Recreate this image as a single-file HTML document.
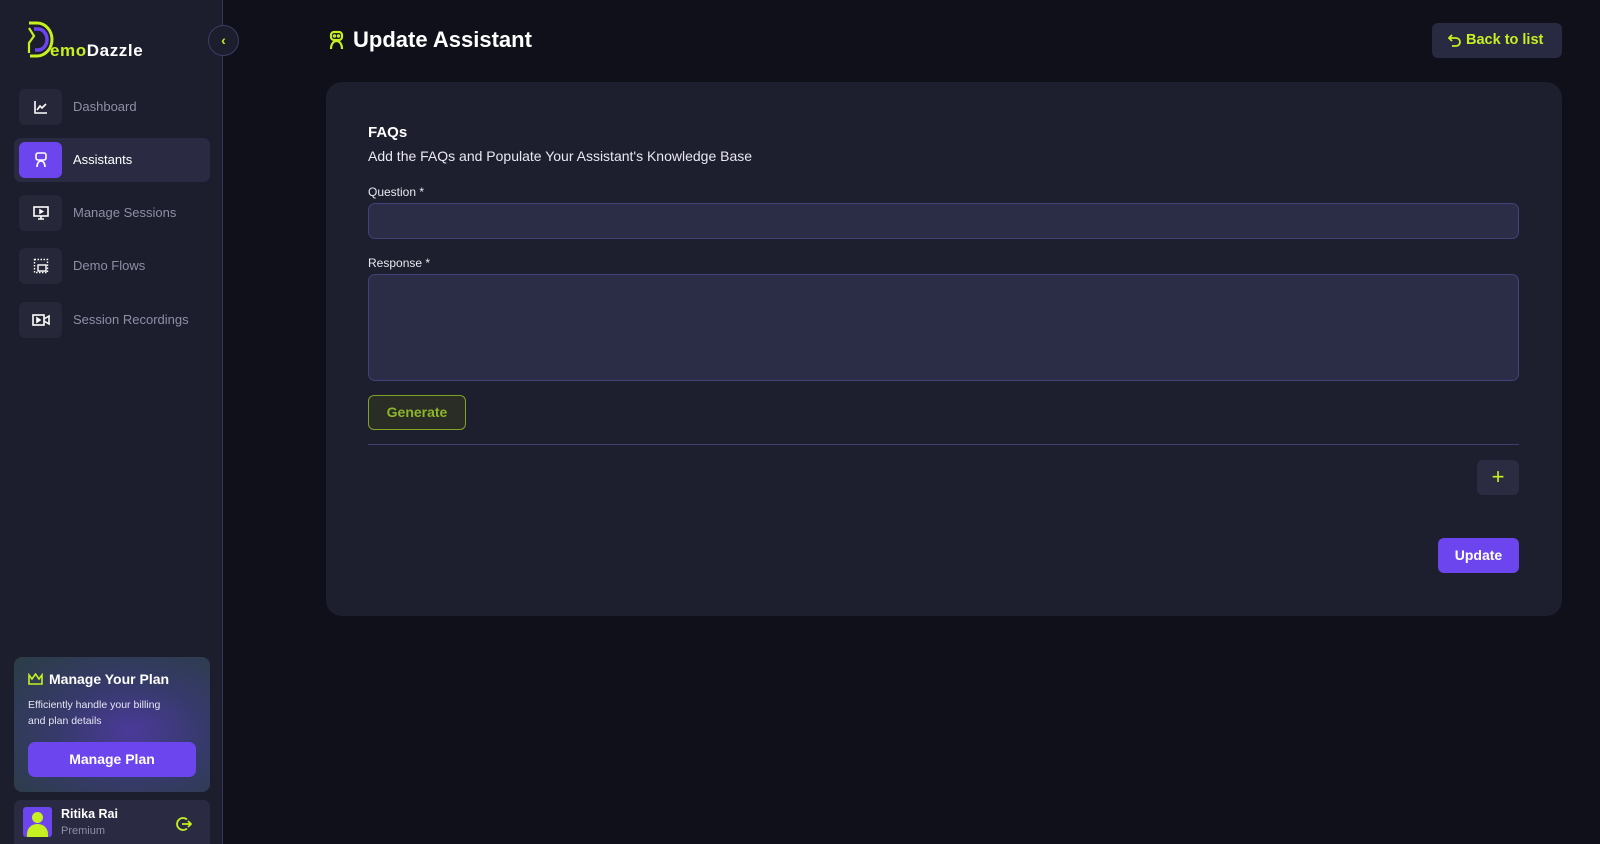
<!DOCTYPE html>
<html><head><meta charset="utf-8"><style>
*{box-sizing:border-box;margin:0;padding:0}
body{width:1600px;height:844px;background:#0f1019;font-family:"Liberation Sans",sans-serif;position:relative;overflow:hidden;color:#fff}
.sb{position:absolute;left:0;top:0;width:223px;height:844px;background:#1d1e2d;border-right:1px solid #34375a}
.abs{position:absolute}
.nav{position:absolute;left:14px;width:196px;height:44px;border-radius:7px}
.nav .ic{position:absolute;left:5px;top:4px;width:43px;height:36px;border-radius:6px;background:#262839;display:flex;align-items:center;justify-content:center}
.nav .lb{position:absolute;left:59px;top:14px;font-size:13px;color:#8d8fa5}
.card{position:absolute;left:326px;top:82px;width:1236px;height:534px;background:#1e1f2e;border-radius:16px}
.inp{position:absolute;left:368px;width:1151px;background:#2b2c45;border:1px solid #40437a;border-radius:7px}
</style></head><body>
<div class="sb">
 <svg class="abs" style="left:26px;top:20px" width="30" height="40" viewBox="0 0 30 40"><path d="M3 3h8a15 16.5 0 0 1 0 33H4" fill="none" stroke="#c6f01f" stroke-width="3"/><path d="M8 9h4a9 10.5 0 0 1 0 21H9" fill="none" stroke="#6b46ef" stroke-width="3.5"/><path d="M3 8l5 8-5 7v10" fill="none" stroke="#c6f01f" stroke-width="2.2"/></svg>
 <div class="abs" style="left:50px;top:41px;font-size:17px;font-weight:bold;letter-spacing:0.6px"><span style="color:#c6f01f">emo</span>Dazzle</div>
 <div class="abs" style="left:208px;top:25px;width:31px;height:31px;border-radius:50%;background:#1d1e2d;border:1px solid #3a3d66;color:#c6f01f;font-size:14px;font-weight:bold;text-align:center;line-height:28px">‹</div>
 <div class="nav" style="top:85px"><div class="ic"><svg width="16" height="16" viewBox="0 0 16 16" fill="none" stroke="#fff" stroke-width="1.6"><path d="M2 2v12h12M4 11l3-4 2 2 4-4"/></svg></div><div class="lb">Dashboard</div></div>
 <div class="nav" style="top:138px;background:#2a2b42"><div class="ic" style="background:#6d45ef"><svg width="16" height="18" viewBox="0 0 16 18" fill="none" stroke="#fff" stroke-width="1.6"><rect x="3" y="2" width="10" height="7" rx="2"/><path d="M4 16c0-4 2-6 4-6s4 2 4 6"/></svg></div><div class="lb" style="color:#fff">Assistants</div></div>
 <div class="nav" style="top:191px"><div class="ic"><svg width="16" height="16" viewBox="0 0 16 16" fill="none" stroke="#fff" stroke-width="1.6"><rect x="1" y="2" width="14" height="9"/><path d="M8 11v3M5 14h6"/><path d="M7 5l2.5 1.5L7 8z" fill="#fff"/></svg></div><div class="lb">Manage Sessions</div></div>
 <div class="nav" style="top:244px"><div class="ic"><svg width="16" height="16" viewBox="0 0 16 16" fill="none" stroke="#fff" stroke-width="1.4"><rect x="1.5" y="1.5" width="13" height="13" stroke-dasharray="1.5 1.5"/><rect x="5" y="7" width="8" height="6"/></svg></div><div class="lb">Demo Flows</div></div>
 <div class="nav" style="top:298px"><div class="ic"><svg width="18" height="14" viewBox="0 0 18 14" fill="none" stroke="#fff" stroke-width="1.6"><rect x="1" y="2" width="11" height="10"/><path d="M12 6l5-3v8l-5-3"/><path d="M5 5l3 2-3 2z" fill="#fff"/></svg></div><div class="lb">Session Recordings</div></div>
 <div class="abs" style="left:14px;top:657px;width:196px;height:135px;border-radius:8px;background:radial-gradient(ellipse at 60% 55%,#4b3a9a 0%,#363a6a 45%,#2b3d44 100%)">
  <svg class="abs" style="left:14px;top:16px" width="15" height="12" viewBox="0 0 15 12" fill="none" stroke="#c6f01f" stroke-width="1.6"><path d="M1 2l3 4 3.5-5 3.5 5 3-4v9H1z"/></svg>
  <div class="abs" style="left:35px;top:14px;font-size:14px;font-weight:bold">Manage Your Plan</div>
  <div class="abs" style="left:14px;top:40px;font-size:10.5px;line-height:16px;color:#e6e6f2">Efficiently handle your billing<br>and plan details</div>
  <div class="abs" style="left:14px;top:85px;width:168px;height:35px;border-radius:7px;background:#6d45ef;font-size:14px;font-weight:bold;text-align:center;line-height:35px">Manage Plan</div>
 </div>
 <div class="abs" style="left:14px;top:800px;width:196px;height:44px;border-radius:7px 7px 0 0;background:#2a2b42">
  <div class="abs" style="left:9px;top:7px;width:29px;height:30px;border-radius:3px;background:#6d45ef;overflow:hidden"><div class="abs" style="left:9px;top:5px;width:11px;height:11px;border-radius:50%;background:#c6f01f"></div><div class="abs" style="left:4px;top:17px;width:21px;height:14px;border-radius:10px 10px 0 0;background:#c6f01f"></div></div>
  <div class="abs" style="left:47px;top:7px;font-size:12.5px;font-weight:bold">Ritika Rai</div>
  <div class="abs" style="left:47px;top:25px;font-size:11px;color:#8d8fa5">Premium</div>
  <svg class="abs" style="left:162px;top:16px" width="16" height="16" viewBox="0 0 16 16" fill="none" stroke="#c6f01f" stroke-width="1.8"><path d="M11 3.5A6 6 0 1 0 11 12.5"/><path d="M6 8h9M12 5l3 3-3 3"/></svg>
 </div>
</div>
<svg class="abs" style="left:328px;top:30px" width="17" height="20" viewBox="0 0 17 20" fill="none" stroke="#c6f01f" stroke-width="2.2"><rect x="3" y="2" width="11" height="8" rx="3"/><path d="M3 19c0-5 2.5-8 5.5-8s5.5 3 5.5 8"/><circle cx="6.5" cy="6" r="0.6" fill="#c6f01f"/><circle cx="10.5" cy="6" r="0.6" fill="#c6f01f"/></svg>
<div class="abs" style="left:353px;top:27px;font-size:22px;font-weight:bold">Update Assistant</div>
<div class="abs" style="left:1432px;top:23px;width:130px;height:35px;border-radius:6px;background:#282a42;color:#c6f01f;font-size:14.5px;font-weight:bold;line-height:35px;padding-left:34px">Back to list</div>
<svg class="abs" style="left:1448px;top:34px" width="14" height="14" viewBox="0 0 14 14" fill="none" stroke="#c6f01f" stroke-width="1.8"><path d="M4 1L1 4l3 3"/><path d="M1 4h7a4 4 0 0 1 0 8H4"/></svg>
<div class="card"></div>
<div class="abs" style="left:368px;top:124px;font-size:15px;font-weight:bold">FAQs</div>
<div class="abs" style="left:368px;top:148px;font-size:14px;color:#e8e8f0">Add the FAQs and Populate Your Assistant's Knowledge Base</div>
<div class="abs" style="left:368px;top:185px;font-size:12px;color:#e8e8f0">Question *</div>
<div class="inp" style="top:203px;height:36px"></div>
<div class="abs" style="left:368px;top:256px;font-size:12px;color:#e8e8f0">Response *</div>
<div class="inp" style="top:274px;height:107px"></div>
<div class="abs" style="left:368px;top:395px;width:98px;height:35px;border-radius:6px;border:1px solid #7fa325;background:#2a2c26;color:#8db52a;font-size:14px;font-weight:bold;text-align:center;line-height:33px">Generate</div>
<div class="abs" style="left:368px;top:444px;width:1151px;height:1px;background:#3e4070"></div>
<div class="abs" style="left:1477px;top:460px;width:42px;height:35px;border-radius:6px;background:#2b2c42;color:#c6f01f;font-size:22px;text-align:center;line-height:34px">+</div>
<div class="abs" style="left:1438px;top:538px;width:81px;height:35px;border-radius:6px;background:#6d45ef;font-size:14px;font-weight:bold;text-align:center;line-height:35px">Update</div>
</body></html>
